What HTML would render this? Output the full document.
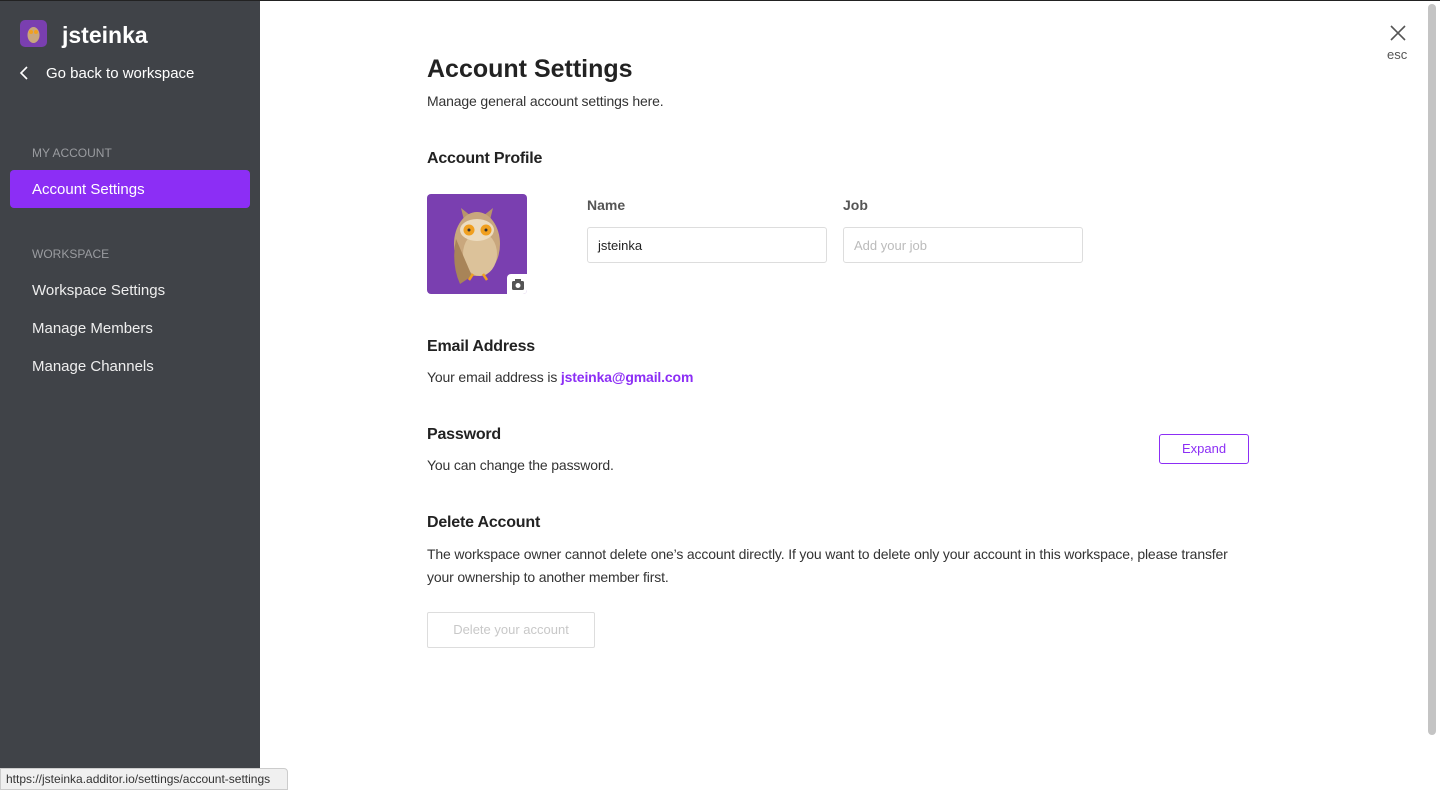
<!DOCTYPE html>
<html><head><style>
*{box-sizing:border-box;margin:0;padding:0}
body{width:1440px;height:790px;overflow:hidden;font-family:"Liberation Sans",sans-serif;background:#fff;position:relative;color:#222}
.top{position:absolute;left:0;top:0;width:1440px;height:1px;background:#222}
.side{position:absolute;left:0;top:1px;width:260px;height:789px;background:#404348;color:#fff}
.logo{position:absolute;left:20px;top:19px;width:27px;height:27px;border-radius:5px;background:#7a3fb0;overflow:hidden}
.ws{position:absolute;left:62px;top:21px;font-size:23px;font-weight:bold}
.back{position:absolute;left:46px;top:64px;font-size:15px}
.sec{position:absolute;left:32px;font-size:12px;color:#9a9ca0}
.item{position:absolute;left:32px;font-size:15px;color:#eee}
.act{position:absolute;left:10px;top:169px;width:240px;height:38px;border-radius:4px;background:#8c2ef5}
h1{position:absolute;left:427px;top:55px;font-size:25px;font-weight:bold}
h2{position:absolute;left:427px;font-size:16px;font-weight:bold;letter-spacing:-0.2px}
p{position:absolute;left:427px;font-size:14px;color:#333;line-height:23px;letter-spacing:-0.15px}
.lbl{position:absolute;top:197px;font-size:14px;font-weight:bold;color:#555}
.inp{position:absolute;top:227px;width:240px;height:36px;border:1px solid #ddd;border-radius:3px;font-size:13px;padding:10px;}
.btn{position:absolute;left:1159px;top:434px;width:90px;height:30px;border:1px solid #8c2ef5;border-radius:3px;color:#8c2ef5;font-size:13px;text-align:center;line-height:28px}
.del{position:absolute;left:427px;top:612px;width:168px;height:36px;border:1px solid #ddd;border-radius:2px;color:#c8c8c8;font-size:13px;text-align:center;line-height:34px}
.sb{position:absolute;left:1428px;top:4px;width:8px;height:731px;border-radius:4px;background:#c4c4c4}
.status{position:absolute;left:0;top:768px;width:288px;height:22px;background:#f0f0f0;border:1px solid #ccc;border-radius:0 4px 0 0;font-size:12px;color:#333;padding:3px 5px}
</style></head><body>
<div class="top"></div>
<div class="side">
 <div class="logo"><svg width="27" height="27"><ellipse cx="13.5" cy="15" rx="6" ry="8" fill="#c9a77d"/><circle cx="11" cy="12" r="2" fill="#f0a020"/><circle cx="16" cy="12" r="2" fill="#f0a020"/></svg></div>
 <div class="ws">jsteinka</div>
 <svg style="position:absolute;left:18px;top:64px" width="12" height="16"><path d="M9 2L3 8l6 6" stroke="#fff" stroke-width="1.6" fill="none"/></svg>
 <div class="back">Go back to workspace</div>
 <div class="sec" style="top:145px">MY ACCOUNT</div>
 <div class="act"></div>
 <div class="item" style="top:180px;color:#fff">Account Settings</div>
 <div class="sec" style="top:246px">WORKSPACE</div>
 <div class="item" style="top:281px">Workspace Settings</div>
 <div class="item" style="top:319px">Manage Members</div>
 <div class="item" style="top:357px">Manage Channels</div>
</div>
<h1>Account Settings</h1>
<p style="top:90px">Manage general account settings here.</p>
<h2 style="top:150px">Account Profile</h2>
<div style="position:absolute;left:427px;top:194px;width:100px;height:100px;border-radius:4px;background:#7a3fb0;overflow:hidden">
<svg width="100" height="100"><path d="M34 14l10 8h12l10-8-3 12H37z" fill="#b8946a"/><ellipse cx="50" cy="50" rx="23" ry="32" fill="#c9a77d"/><ellipse cx="53" cy="60" rx="17" ry="22" fill="#dcc29a"/><path d="M29 45q-5 25 4 45l12-8z" fill="#a88458"/><ellipse cx="50" cy="36" rx="17" ry="11" fill="#ecdcc0"/><circle cx="42" cy="36" r="5.5" fill="#f0a020"/><circle cx="59" cy="36" r="5.5" fill="#f0a020"/><circle cx="42" cy="36" r="1.5" fill="#333"/><circle cx="59" cy="36" r="1.5" fill="#333"/><path d="M46 80l-4 6M56 80l4 6" stroke="#f0a020" stroke-width="2.5"/></svg>
<div style="position:absolute;left:80px;top:80px;width:20px;height:20px;background:#fff;border-radius:4px 0 0 0"><svg width="20" height="20"><rect x="5" y="7" width="12" height="9" rx="1.5" fill="#555"/><rect x="8" y="5" width="6" height="3" fill="#555"/><circle cx="11" cy="11.5" r="2.5" fill="#fff"/></svg></div></div>
<div class="lbl" style="left:587px">Name</div>
<div class="lbl" style="left:843px">Job</div>
<div class="inp" style="left:587px;color:#222">jsteinka</div>
<div class="inp" style="left:843px;color:#bbb">Add your job</div>
<h2 style="top:338px">Email Address</h2>
<p style="top:366px">Your email address is <b style="color:#8c2ef5">jsteinka@gmail.com</b></p>
<h2 style="top:426px">Password</h2>
<p style="top:454px">You can change the password.</p>
<div class="btn">Expand</div>
<h2 style="top:514px">Delete Account</h2>
<p style="top:543px">The workspace owner cannot delete one’s account directly. If you want to delete only your account in this workspace, please transfer<br>your ownership to another member first.</p>
<div class="del">Delete your account</div>
<svg style="position:absolute;left:1389px;top:24px" width="18" height="18"><path d="M2 2l14 14M16 2L2 16" stroke="#555" stroke-width="1.6"/></svg>
<div style="position:absolute;left:1387px;top:47px;font-size:13px;color:#555">esc</div>
<div class="sb"></div>
<div class="status">https://jsteinka.additor.io/settings/account-settings</div>
</body></html>
